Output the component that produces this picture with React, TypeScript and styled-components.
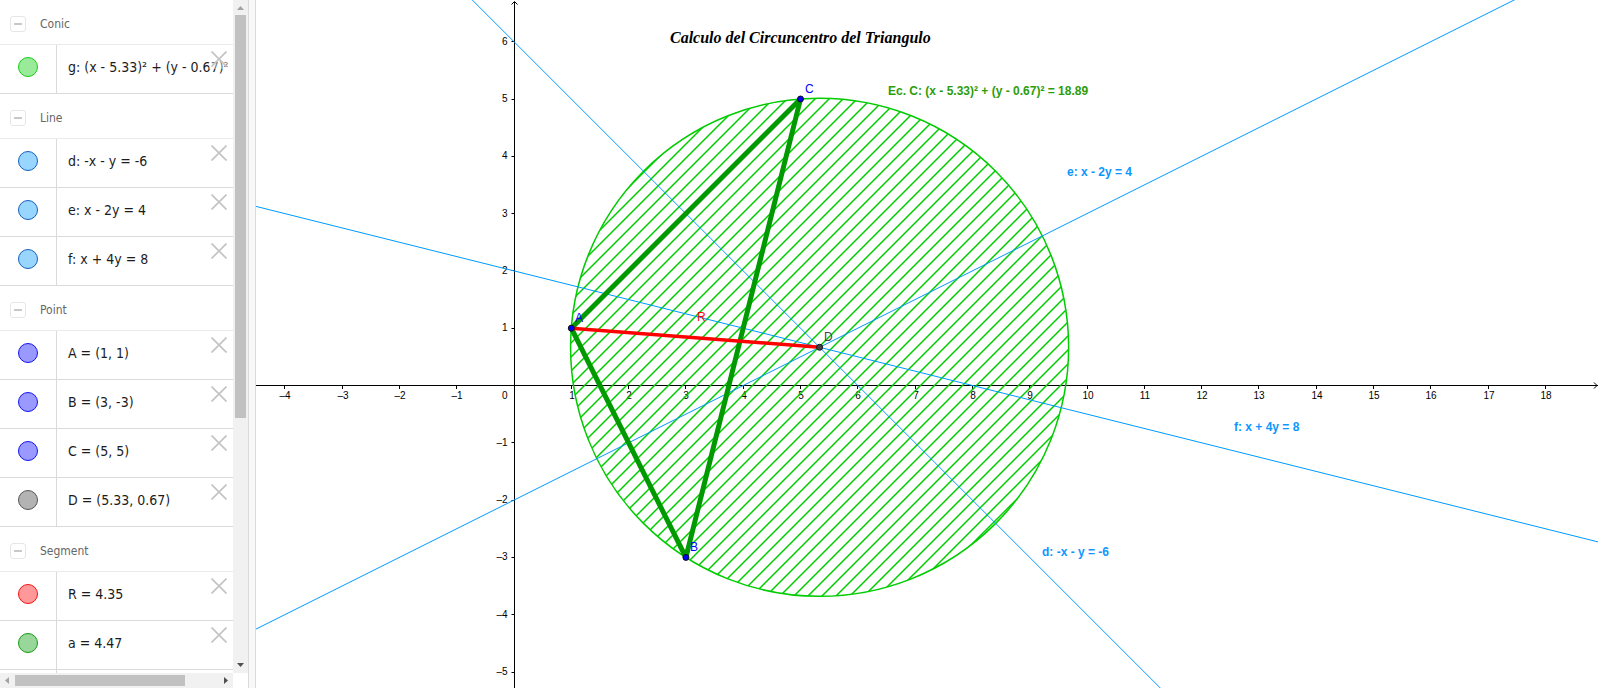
import React, { useState } from 'react';
import styled, { createGlobalStyle } from 'styled-components';

const GlobalStyle = createGlobalStyle`
  * { box-sizing: border-box; }
  body { margin: 0; background: #fff; overflow: hidden; }
  button { padding: 0; margin: 0; font: inherit; cursor: pointer; }
`;

const Page = styled.div`
  display: flex;
  height: 100vh;
  padding: 0 2px 2px 0;
  font-family: 'DejaVu Sans Condensed', 'DejaVu Sans', sans-serif;
`;

const Sidebar = styled.aside`
  display: grid;
  grid-template: minmax(0, 1fr) 15px / 233px 15px;
  flex: none;
  background: #fff;
`;

const AlgebraList = styled.div`
  overflow: hidden;
`;

const GroupHeader = styled.header`
  display: flex;
  align-items: center;
  gap: 14px;
  height: 45px;
  padding: 4px 0 0 10px;
  border-bottom: 1px solid #ebebeb;
`;

const GroupTitle = styled.h2`
  margin: 0;
  color: #666;
  font-size: 12px;
  font-weight: 400;
  line-height: 16px;
`;

const CollapseButton = styled.button`
  display: grid;
  place-items: center;
  width: 16px;
  height: 16px;
  background: #fff;
  border: 1px solid #e6e6e6;
  border-radius: 3px;

  &::before {
    content: '';
    width: 8px;
    height: 2px;
    background: #c8c8c8;
  }
`;

const Rows = styled.ul`
  margin: 0;
  padding: 0;
  list-style: none;
`;

const Row = styled.li`
  display: grid;
  grid-template-columns: 57px minmax(0, 1fr);
  position: relative;
  height: 49px;
  border-bottom: 1px solid #dadada;
`;

const MarbleCell = styled.div`
  display: grid;
  place-items: center;
  padding-bottom: 4px;
  border-right: 1px solid #dadada;
`;

const Marble = styled.button<{ $fill: string; $edge: string; $shown: boolean }>`
  width: 20px;
  height: 20px;
  border: 1px solid ${(p) => p.$edge};
  border-radius: 50%;
  background: ${(p) => (p.$shown ? p.$fill : '#fff')};
`;

const Definition = styled.div`
  padding: 12px 0 0 11px;
  overflow: hidden;
  color: #1c1c1c;
  font-size: 14px;
  line-height: 20px;
  white-space: nowrap;
`;

const DeleteButton = styled.button`
  position: absolute;
  top: 4px;
  right: 4px;
  display: grid;
  place-items: center;
  width: 20px;
  height: 20px;
  border: 0;
  background: rgba(255, 255, 255, 0.4);
`;

const Scrollbar = styled.div<{ $horizontal?: boolean }>`
  display: flex;
  flex-direction: ${(p) => (p.$horizontal ? 'row' : 'column')};
  background: #f1f1f1;
`;

const ScrollArrow = styled.svg`
  display: block;
  flex: none;
  width: 15px;
  height: 15px;
`;

const Thumb = styled.div<{ $horizontal?: boolean; $share: number }>`
  flex: ${(p) => p.$share} 1 0;
  margin: ${(p) => (p.$horizontal ? '2px 0' : '0 2px')};
  background: #c1c1c1;
`;

const TrackRest = styled.div<{ $share: number }>`
  flex: ${(p) => p.$share} 1 0;
`;

const Divider = styled.div`
  flex: none;
  width: 8px;
  background: #f8f8f8;
  border: solid #dadada;
  border-width: 0 1px;
`;

const GraphView = styled.main`
  flex: 1;
  min-width: 0;
`;

const Plot = styled.svg`
  display: block;
  width: 100%;
  height: 100%;
  overflow: hidden;
  font-family: 'Liberation Sans', Arial, sans-serif;
`;

const AxisNumber = styled.text`
  font-size: 10px;
  fill: #000;
`;

const PointName = styled.text`
  font-size: 12px;
`;

const Equation = styled.text`
  font-size: 12px;
  font-weight: 700;
`;

const PlotTitle = styled.text`
  font-family: 'Liberation Serif', 'Times New Roman', serif;
  font-size: 16px;
  font-style: italic;
  font-weight: 700;
`;

type Item = { text: string; fill: string; edge: string };
type Group = { title: string; items: Item[] };

const blueLine = { fill: '#99d6ff', edge: '#1560bd' };
const bluePoint = { fill: '#9999ff', edge: '#1414f0' };
const darkGreen = { fill: '#99d699', edge: '#149b14' };

const groups: Group[] = [
  {
    title: 'Conic',
    items: [{ text: 'g: (x - 5.33)² + (y - 0.67)² =', fill: '#99eb99', edge: '#14cc14' }],
  },
  {
    title: 'Line',
    items: [
      { text: 'd: -x - y = -6', ...blueLine },
      { text: 'e: x - 2y = 4', ...blueLine },
      { text: 'f: x + 4y = 8', ...blueLine },
    ],
  },
  {
    title: 'Point',
    items: [
      { text: 'A = (1, 1)', ...bluePoint },
      { text: 'B = (3, -3)', ...bluePoint },
      { text: 'C = (5, 5)', ...bluePoint },
      { text: 'D = (5.33, 0.67)', fill: '#b3b3b3', edge: '#555' },
    ],
  },
  {
    title: 'Segment',
    items: [
      { text: 'R = 4.35', fill: '#ff9999', edge: '#f01414' },
      { text: 'a = 4.47', ...darkGreen },
    ],
  },
];

function AlgebraRow({ item }: { item: Item }) {
  const [shown, setShown] = useState(true);
  return (
    <Row>
      <MarbleCell>
        <Marble
          type="button"
          aria-label={`Show or hide ${item.text}`}
          aria-pressed={shown}
          $fill={item.fill}
          $edge={item.edge}
          $shown={shown}
          onClick={() => setShown(!shown)}
        />
      </MarbleCell>
      <Definition>{item.text}</Definition>
      <DeleteButton type="button" aria-label={`Delete ${item.text}`}>
        <svg width="16" height="16" viewBox="0 0 16 16" aria-hidden="true">
          <path d="M.5 .5 15.5 15.5M15.5 .5 .5 15.5" stroke="#c4c4c4" strokeWidth="1.7" />
        </svg>
      </DeleteButton>
    </Row>
  );
}

function AlgebraGroup({ group }: { group: Group }) {
  const [open, setOpen] = useState(true);
  return (
    <section>
      <GroupHeader>
        <CollapseButton
          type="button"
          aria-label={`Collapse ${group.title}`}
          aria-expanded={open}
          onClick={() => setOpen(!open)}
        />
        <GroupTitle>{group.title}</GroupTitle>
      </GroupHeader>
      {open && (
        <Rows>
          {group.items.map((item) => (
            <AlgebraRow key={item.text} item={item} />
          ))}
        </Rows>
      )}
    </section>
  );
}

/* Coordinate system of the plot: origin and pixels per unit. */
const OX = 258;
const OY = 385.5;
const AXIS_X = 258.5;
const UNIT = 57.3;
const px = (x: number) => OX + x * UNIT;
const py = (y: number) => OY - y * UNIT;
const snap = (v: number) => Math.floor(v) + 0.5;

const xTicks = Array.from({ length: 23 }, (_, i) => i - 4).filter((n) => n !== 0);
const yTicks = Array.from({ length: 12 }, (_, i) => i - 5).filter((n) => n !== 0);
const label = (n: number) => (n < 0 ? `–${-n}` : `${n}`);

const center = { x: 16 / 3, y: 2 / 3 };
const radius = Math.hypot(center.x - 1, center.y - 1);

const lines = [
  (x: number) => 6 - x,
  (x: number) => (x - 4) / 2,
  (x: number) => (8 - x) / 4,
];

const points = [
  { name: 'A', x: 1, y: 1, fill: '#0000ff', text: '#0000ff' },
  { name: 'B', x: 3, y: -3, fill: '#0000ff', text: '#0000ff' },
  { name: 'C', x: 5, y: 5, fill: '#0000ff', text: '#0000ff' },
  { name: 'D', ...center, fill: '#444444', text: '#444444' },
];

function Segment(p: { from: number[]; to: number[]; color: string; width: number }) {
  return (
    <line
      x1={px(p.from[0])}
      y1={py(p.from[1])}
      x2={px(p.to[0])}
      y2={py(p.to[1])}
      stroke={p.color}
      strokeWidth={p.width}
      strokeLinecap="round"
    />
  );
}

function Graph() {
  return (
    <Plot role="img" aria-label="Calculo del Circuncentro del Triangulo">
      <defs>
        <pattern id="hatch" width="14" height="14" patternUnits="userSpaceOnUse">
          <path d="M-4 4 4 -4M0 14 14 0M10 18 18 10" stroke="#00cc00" strokeWidth="1.5" />
        </pattern>
      </defs>

      <g stroke="#000" fill="none">
        <line x1="0" y1={OY} x2="100%" y2={OY} />
        <line x1={AXIS_X} y1="2" x2={AXIS_X} y2="100%" />
        <path d={`M${AXIS_X - 3} 4.5 ${AXIS_X} 1.5 ${AXIS_X + 3} 4.5`} />
        <svg x="100%" y={OY} overflow="visible">
          <path d="M-4 -3 -1 0 -4 3" />
        </svg>
        {xTicks.map((n) => (
          <line key={n} x1={snap(px(n))} x2={snap(px(n))} y1="386" y2="389" />
        ))}
        {yTicks.map((n) => (
          <line key={n} x1={AXIS_X - 3} x2={AXIS_X} y1={snap(py(n))} y2={snap(py(n))} />
        ))}
      </g>
      {xTicks.map((n) => (
        <AxisNumber key={n} x={Math.floor(px(n)) + 1} y="399" textAnchor="middle">
          {label(n)}
        </AxisNumber>
      ))}
      {yTicks.map((n) => (
        <AxisNumber key={n} x={AXIS_X - 7} y={Math.round(py(n)) + 3} textAnchor="end">
          {label(n)}
        </AxisNumber>
      ))}
      <AxisNumber x={AXIS_X - 7} y="399" textAnchor="end">
        0
      </AxisNumber>

      <circle
        cx={px(center.x)}
        cy={py(center.y)}
        r={radius * UNIT}
        fill="url(#hatch)"
        stroke="#00cc00"
        strokeWidth="1.5"
      />
      {lines.map((f, i) => (
        <line
          key={i}
          x1={px(-40)}
          y1={py(f(-40))}
          x2={px(80)}
          y2={py(f(80))}
          stroke="#0099ff"
          strokeWidth="1"
        />
      ))}

      <Segment from={[1, 1]} to={[3, -3]} color="#009900" width={5} />
      <Segment from={[3, -3]} to={[5, 5]} color="#009900" width={5} />
      <Segment from={[5, 5]} to={[1, 1]} color="#009900" width={5} />
      <Segment from={[1, 1]} to={[center.x, center.y]} color="#ff0000" width={3.5} />

      {points.map((p) => (
        <g key={p.name}>
          <circle cx={px(p.x)} cy={py(p.y)} r="3" fill={p.fill} stroke="#111" />
          <PointName x={Math.round(px(p.x)) + 4} y={Math.round(py(p.y)) - 6} fill={p.text}>
            {p.name}
          </PointName>
        </g>
      ))}
      <PointName x="441" y="321" fill="#ff0000">
        R
      </PointName>

      <PlotTitle x="414" y="43">
        Calculo del Circuncentro del Triangulo
      </PlotTitle>
      <Equation x="632" y="95" fill="#2d9d0c">
        Ec. C: (x - 5.33)² + (y - 0.67)² = 18.89
      </Equation>
      <Equation x="811" y="176" fill="#0d96ff">
        e: x - 2y = 4
      </Equation>
      <Equation x="978" y="431" fill="#0d96ff">
        f: x + 4y = 8
      </Equation>
      <Equation x="786" y="556" fill="#0d96ff">
        d: -x - y = -6
      </Equation>
    </Plot>
  );
}

export default function App() {
  return (
    <Page>
      <GlobalStyle />
      <Sidebar>
        <AlgebraList>
          {groups.map((g) => (
            <AlgebraGroup key={g.title} group={g} />
          ))}
          <Row>
            <MarbleCell />
          </Row>
        </AlgebraList>
        <Scrollbar aria-hidden="true">
          <ScrollArrow>
            <path d="M4 10 7.500 6 11 10Z" fill="#a3a3a3" />
          </ScrollArrow>
          <Thumb $share={403} />
          <TrackRest $share={240} />
          <ScrollArrow>
            <path d="M4 5 11 5 7.500 9Z" fill="#505050" />
          </ScrollArrow>
        </Scrollbar>
        <Scrollbar $horizontal aria-hidden="true">
          <ScrollArrow>
            <path d="M9 4 5 7.500 9 11Z" fill="#a3a3a3" />
          </ScrollArrow>
          <Thumb $horizontal $share={170} />
          <TrackRest $share={33} />
          <ScrollArrow>
            <path d="M6 4 10 7.500 6 11Z" fill="#505050" />
          </ScrollArrow>
        </Scrollbar>
      </Sidebar>
      <Divider />
      <GraphView>
        <Graph />
      </GraphView>
    </Page>
  );
}
